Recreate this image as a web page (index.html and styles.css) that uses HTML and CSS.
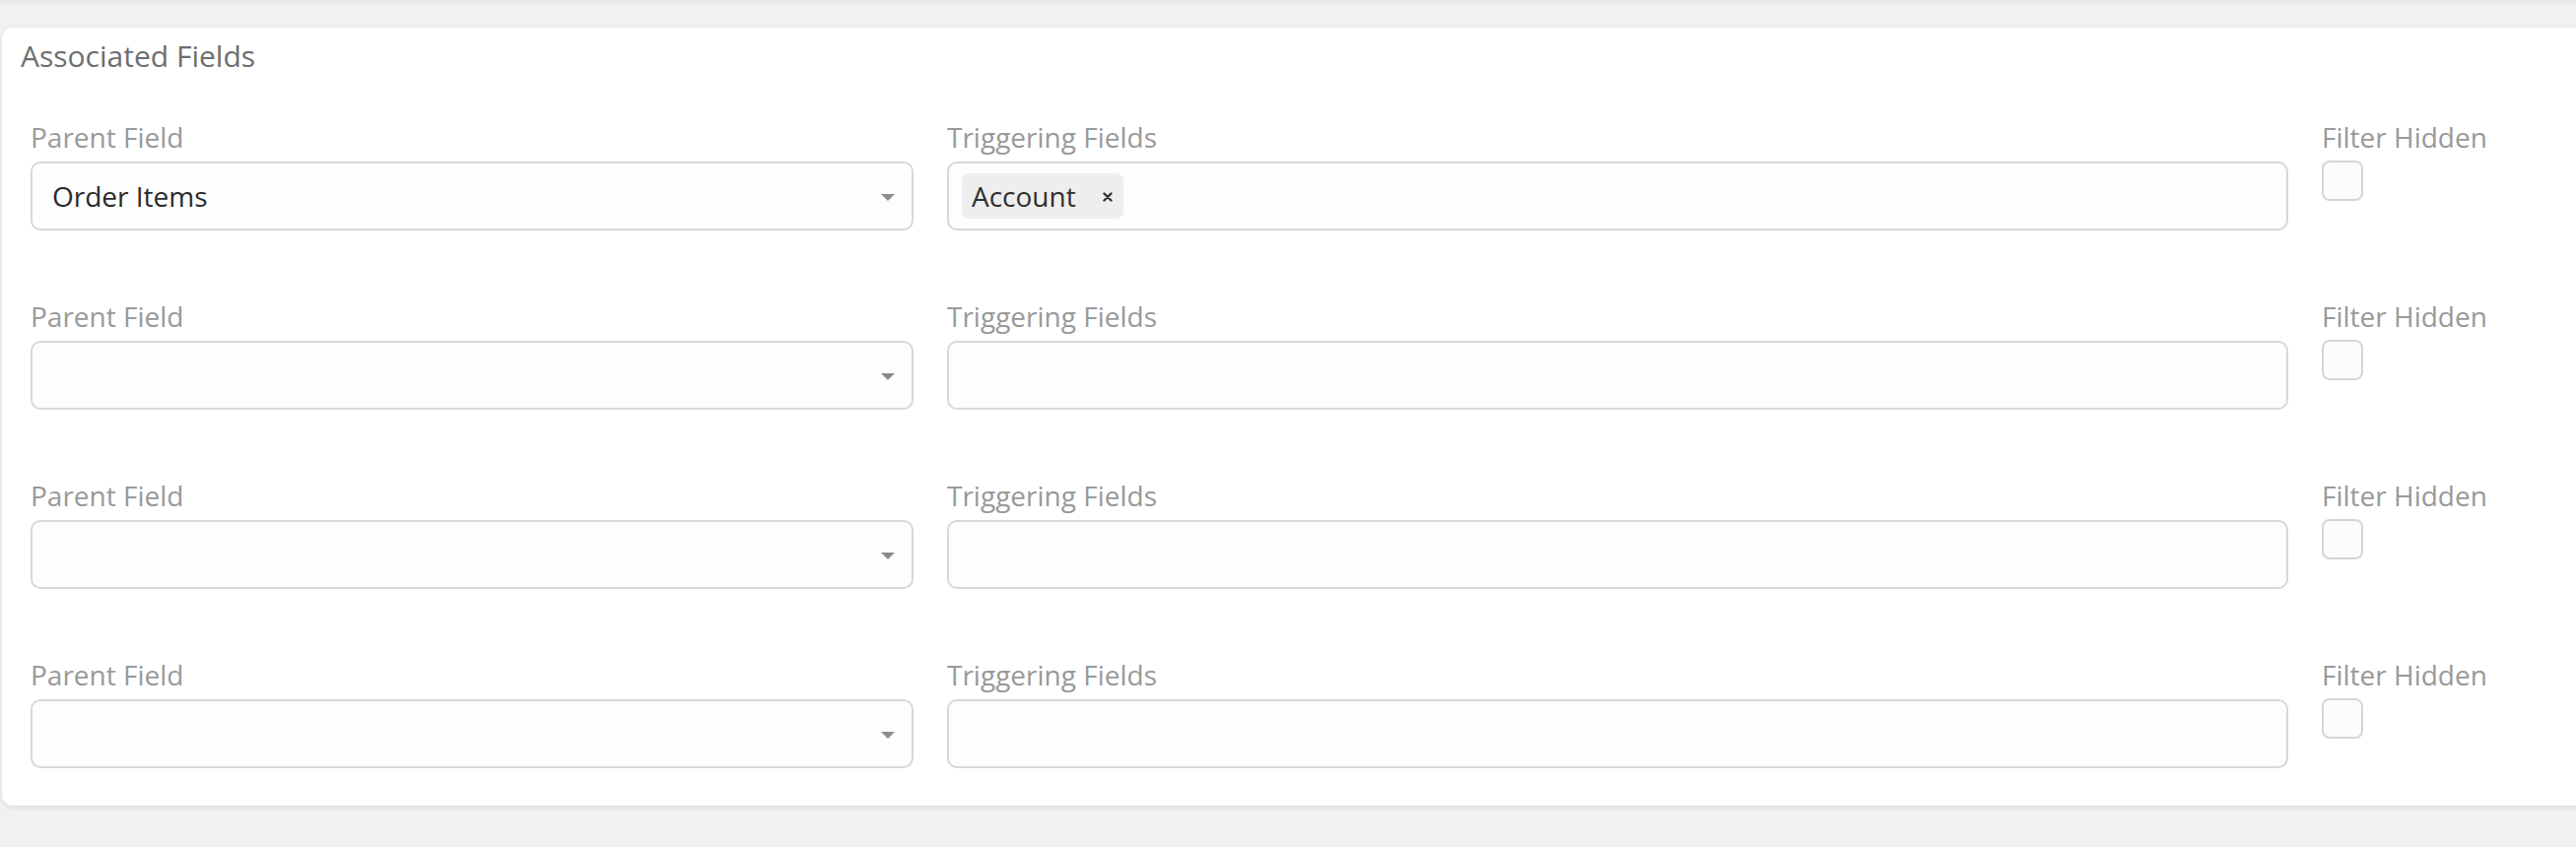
FILE: index.html
```html
<!DOCTYPE html>
<html lang="en">
<head>
<meta charset="utf-8">
<title>Associated Fields</title>
<link rel="stylesheet" href="styles.css">
</head>
<body>
<div class="top-shade"></div>
<section class="card">
  <h2 class="card-title">Associated Fields</h2>
  <div class="rows">
    <div class="field-row">
      <div class="field">
        <label class="lbl">Parent Field</label>
        <div class="select"><span class="value">Order Items</span><span class="caret"></span></div>
      </div>
      <div class="field">
        <label class="lbl">Triggering Fields</label>
        <div class="multi">
          <span class="tag">Account<svg class="tag-x" width="10" height="10" viewBox="0 0 10 10"><path d="M1.5 1.5 L8.5 8.5 M8.5 1.5 L1.5 8.5" stroke="#333" stroke-width="2.4" stroke-linecap="round"/></svg></span>
        </div>
      </div>
      <div class="field">
        <label class="lbl">Filter Hidden</label>
        <span class="checkbox"></span>
      </div>
    </div>
    <div class="field-row">
      <div class="field">
        <label class="lbl">Parent Field</label>
        <div class="select"><span class="value"></span><span class="caret"></span></div>
      </div>
      <div class="field">
        <label class="lbl">Triggering Fields</label>
        <div class="multi"></div>
      </div>
      <div class="field">
        <label class="lbl">Filter Hidden</label>
        <span class="checkbox"></span>
      </div>
    </div>
    <div class="field-row">
      <div class="field">
        <label class="lbl">Parent Field</label>
        <div class="select"><span class="value"></span><span class="caret"></span></div>
      </div>
      <div class="field">
        <label class="lbl">Triggering Fields</label>
        <div class="multi"></div>
      </div>
      <div class="field">
        <label class="lbl">Filter Hidden</label>
        <span class="checkbox"></span>
      </div>
    </div>
    <div class="field-row">
      <div class="field">
        <label class="lbl">Parent Field</label>
        <div class="select"><span class="value"></span><span class="caret"></span></div>
      </div>
      <div class="field">
        <label class="lbl">Triggering Fields</label>
        <div class="multi"></div>
      </div>
      <div class="field">
        <label class="lbl">Filter Hidden</label>
        <span class="checkbox"></span>
      </div>
    </div>
  </div>
</section>
</body>
</html>
```
FILE: styles.css
```css
html, body {
  margin: 0;
  padding: 0;
}
body {
  background: #f0f1f3;
  font-family: "Open Sans", "Noto Sans", sans-serif;
  overflow: hidden;
  width: 2614px;
  height: 860px;
}
.top-shade {
  height: 6px;
  background: linear-gradient(#e4e5e7, #f0f1f3);
}
.card {
  margin: 22px 0 0 2px;
  width: 2800px;
  background: #ffffff;
  border-radius: 11px;
  box-shadow: 0 2px 6px rgba(0, 0, 0, 0.09);
  padding: 9px 0 38px 19px;
  box-sizing: border-box;
}
.card-title {
  margin: 0;
  font-size: 30px;
  line-height: 40px;
  font-weight: 400;
  color: #6e6e6e;
}
.rows {
  margin-top: 44px;
  padding-left: 10px;
  display: flex;
  flex-direction: column;
  gap: 69px;
}
.field-row {
  display: grid;
  grid-template-columns: 896px 1361px 300px;
  column-gap: 34px;
}
.field {
  display: flex;
  flex-direction: column;
}
.lbl {
  display: block;
  font-size: 28px;
  line-height: 36px;
  color: #999999;
  margin-bottom: 7px;
}
.select, .multi {
  height: 70px;
  box-sizing: border-box;
  border: 2px solid #d6d9d9;
  border-radius: 10px;
  background: #fdfdfd;
  display: flex;
  align-items: center;
}
.select {
  padding: 0 17px 0 20px;
}
.value {
  flex: 1;
  font-size: 28px;
  color: #2a2a2a;
}
.caret {
  width: 0;
  height: 0;
  border-left: 7.5px solid transparent;
  border-right: 7.5px solid transparent;
  border-top: 7px solid #8c8c8c;
  margin-top: 3px;
}
.multi {
  padding-left: 13px;
}
.tag {
  display: inline-flex;
  align-items: center;
  height: 46px;
  padding: 0 11px 0 10px;
  border-radius: 8px;
  background: #eeeeee;
  font-size: 28px;
  color: #2f2f2f;
}
.tag-x {
  margin-left: 27px;
  margin-top: 2px;
}
.checkbox {
  display: block;
  width: 42px;
  height: 41px;
  box-sizing: border-box;
  border: 2px solid #d3d7d7;
  border-radius: 8px;
  background: #fcfcfc;
  margin-top: -1px;
}
```
